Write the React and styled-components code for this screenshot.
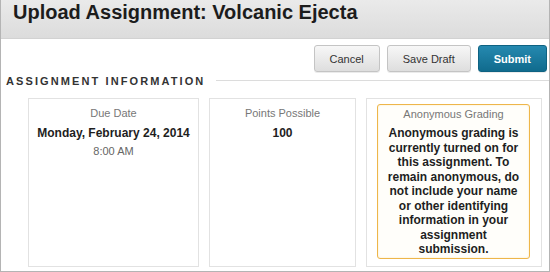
import styled, { createGlobalStyle } from 'styled-components';

const GlobalStyle = createGlobalStyle`
  body {
    margin: 0;
    background: #ffffff;
    font-family: "Liberation Sans", Arial, sans-serif;
  }
`;

const infoCards = [
  { label: 'Due Date', value: 'Monday, February 24, 2014', time: '8:00 AM', width: 171 },
  { label: 'Points Possible', value: '100', width: 147 },
];

export default function App() {
  return (
    <>
      <GlobalStyle />
      <Page>
        <Header>
          <Title>Upload Assignment: Volcanic Ejecta</Title>
        </Header>
        <Toolbar>
          <Button>Cancel</Button>
          <Button>Save Draft</Button>
          <Button primary>Submit</Button>
        </Toolbar>
        <SectionHeading>
          <SectionTitle>Assignment Information</SectionTitle>
          <Rule />
        </SectionHeading>
        <CardRow>
          {infoCards.map((card) => (
            <Card key={card.label} width={card.width}>
              <Label>{card.label}</Label>
              <Value>{card.value}</Value>
              {card.time && <Time>{card.time}</Time>}
            </Card>
          ))}
          <Card width={176} notice>
            <Notice>
              <Label>Anonymous Grading</Label>
              <NoticeText>
                Anonymous grading is currently turned on for this assignment.
                To remain anonymous, do not include your name or other
                identifying information in your assignment submission.
              </NoticeText>
            </Notice>
          </Card>
        </CardRow>
      </Page>
    </>
  );
}

const Page = styled.div`
  box-sizing: border-box;
  width: 550px;
  height: 272px;
  border: 1px solid #b4b4b4;
  border-top: none;
  display: flex;
  flex-direction: column;
  overflow: hidden;
`;

const Header = styled.div`
  height: 39px;
  flex-shrink: 0;
  background: linear-gradient(#eaeaea, #dcdcdc);
  border-bottom: 1px solid #d2d2d2;
  box-sizing: border-box;
  padding-left: 12px;
`;

const Title = styled.h1`
  margin: 0;
  font-size: 20px;
  line-height: 24px;
  font-weight: bold;
  color: #1c1c1c;
`;

const Toolbar = styled.div`
  display: flex;
  justify-content: flex-end;
  gap: 7px;
  margin-top: 6px;
  padding-right: 2px;
`;

const Button = styled.button`
  box-sizing: border-box;
  height: 27px;
  padding: 0 15px;
  border-radius: 3px;
  font-family: "Liberation Sans", Arial, sans-serif;
  font-size: 11px;
  font-weight: ${(props) => (props.primary ? 'bold' : 'normal')};
  color: ${(props) => (props.primary ? '#ffffff' : '#333333')};
  border: 1px solid ${(props) => (props.primary ? '#0e6282' : '#c4c4c4')};
  background: ${(props) =>
    props.primary
      ? 'linear-gradient(#2589b0, #106b8d)'
      : 'linear-gradient(#f7f7f7, #dedede)'};
  box-shadow: 0 1px 0 rgba(0, 0, 0, 0.08);
`;

const SectionHeading = styled.div`
  display: flex;
  align-items: center;
  margin-top: 2px;
  padding-left: 5px;
`;

const SectionTitle = styled.h2`
  margin: 0;
  font-size: 11px;
  line-height: 14px;
  font-weight: bold;
  letter-spacing: 2.1px;
  text-transform: uppercase;
  color: #333333;
  white-space: nowrap;
`;

const Rule = styled.div`
  flex: 1;
  height: 1px;
  margin-left: 11px;
  margin-top: -2px;
  background: #dcdcdc;
`;

const CardRow = styled.div`
  display: flex;
  gap: 10px;
  margin-top: 10px;
  padding-left: 27px;
  height: 169px;
`;

const Card = styled.div`
  box-sizing: border-box;
  width: ${(props) => props.width}px;
  border: 1px solid #e2e2e2;
  background: #ffffff;
  text-align: center;
  padding: ${(props) => (props.notice ? '5px 11px 7px 10px' : '7px 4px 0')};
  display: flex;
  flex-direction: column;
`;

const Label = styled.div`
  font-size: 11px;
  line-height: 14px;
  color: #777777;
`;

const Value = styled.div`
  margin-top: 3px;
  font-size: 12px;
  line-height: 20px;
  font-weight: bold;
  color: #1e1e1e;
`;

const Time = styled.div`
  font-size: 11px;
  line-height: 16px;
  color: #666666;
`;

const Notice = styled.div`
  flex: 1;
  box-sizing: border-box;
  border: 1px solid #eeb64a;
  border-radius: 3px;
  background: #fffefa;
  box-shadow: inset 0 0 2px rgba(238, 182, 74, 0.35);
  padding: 2px 7px 0;
`;

const NoticeText = styled.p`
  margin: 5px 0 0;
  font-size: 12px;
  line-height: 14.5px;
  font-weight: bold;
  color: #1e1e1e;
`;
